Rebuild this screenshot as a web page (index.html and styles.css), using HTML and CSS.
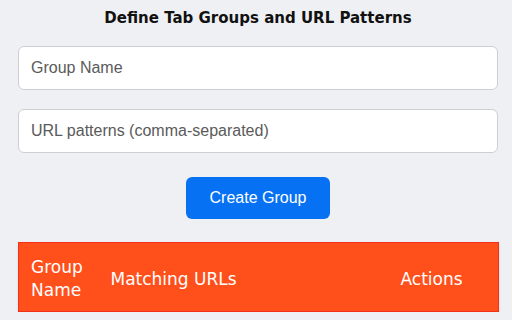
FILE: index.html
```html
<!DOCTYPE html>
<html>
<head>
<meta charset="utf-8">
<link rel="stylesheet" href="styles.css">
</head>
<body>
<div class="container">
  <h1 class="title">Define Tab Groups and URL Patterns</h1>
  <input class="field" type="text" placeholder="Group Name">
  <input class="field" type="text" placeholder="URL patterns (comma-separated)">
  <div class="actions">
    <button class="btn">Create Group</button>
  </div>
  <table class="groups">
    <colgroup>
      <col class="c1"><col class="c2"><col class="c3">
    </colgroup>
    <thead>
      <tr><th>Group Name</th><th>Matching URLs</th><th>Actions</th></tr>
    </thead>
  </table>
</div>
</body>
</html>
```
FILE: styles.css
```css
html, body {
  margin: 0;
  padding: 0;
  background: #eff0f4;
}
body {
  font-family: "Liberation Sans", Arial, sans-serif;
}
.container {
  width: 480px;
  margin-left: 18px;
  padding-top: 9px;
  display: flex;
  flex-direction: column;
}
.title {
  margin: 0 0 19px;
  font-family: "DejaVu Sans", sans-serif;
  font-size: 15px;
  font-weight: bold;
  text-align: center;
  color: #111;
}
.field {
  box-sizing: border-box;
  width: 480px;
  height: 44px;
  margin: 0 0 19px;
  padding: 0 12px;
  border: 1px solid #cfcfd3;
  border-radius: 6px;
  background: #fff;
  font-family: "Liberation Sans", Arial, sans-serif;
  font-size: 16px;
  color: #333;
}
.field::placeholder {
  color: #5a5a5a;
}
.actions {
  display: flex;
  justify-content: center;
  margin-top: 5px;
}
.btn {
  width: 144px;
  height: 42px;
  border: none;
  border-radius: 6px;
  background: #0771f4;
  color: #fff;
  font-family: "Liberation Sans", Arial, sans-serif;
  font-size: 16px;
  padding: 0;
}
.groups {
  margin-top: 23px;
  width: 480px;
  border-collapse: collapse;
  table-layout: fixed;
  box-shadow: 0 2px 3px rgba(0,0,0,0.08);
}
.c1 { width: 80px; }
.c2 { width: 290px; }
.c3 { width: 110px; }
.groups th {
  background: #ff4f1b;
  color: #fff;
  border-top: 1px solid #f5301a;
  border-bottom: 1px solid #f5301a;
  font-family: "DejaVu Sans", sans-serif;
  font-size: 17px;
  font-weight: normal;
  line-height: 23px;
  text-align: left;
  padding: 13px 12px 9px;
}
.groups th:first-child { border-left: 1px solid #f5301a; }
.groups th:last-child { border-right: 1px solid #f5301a; }
```
